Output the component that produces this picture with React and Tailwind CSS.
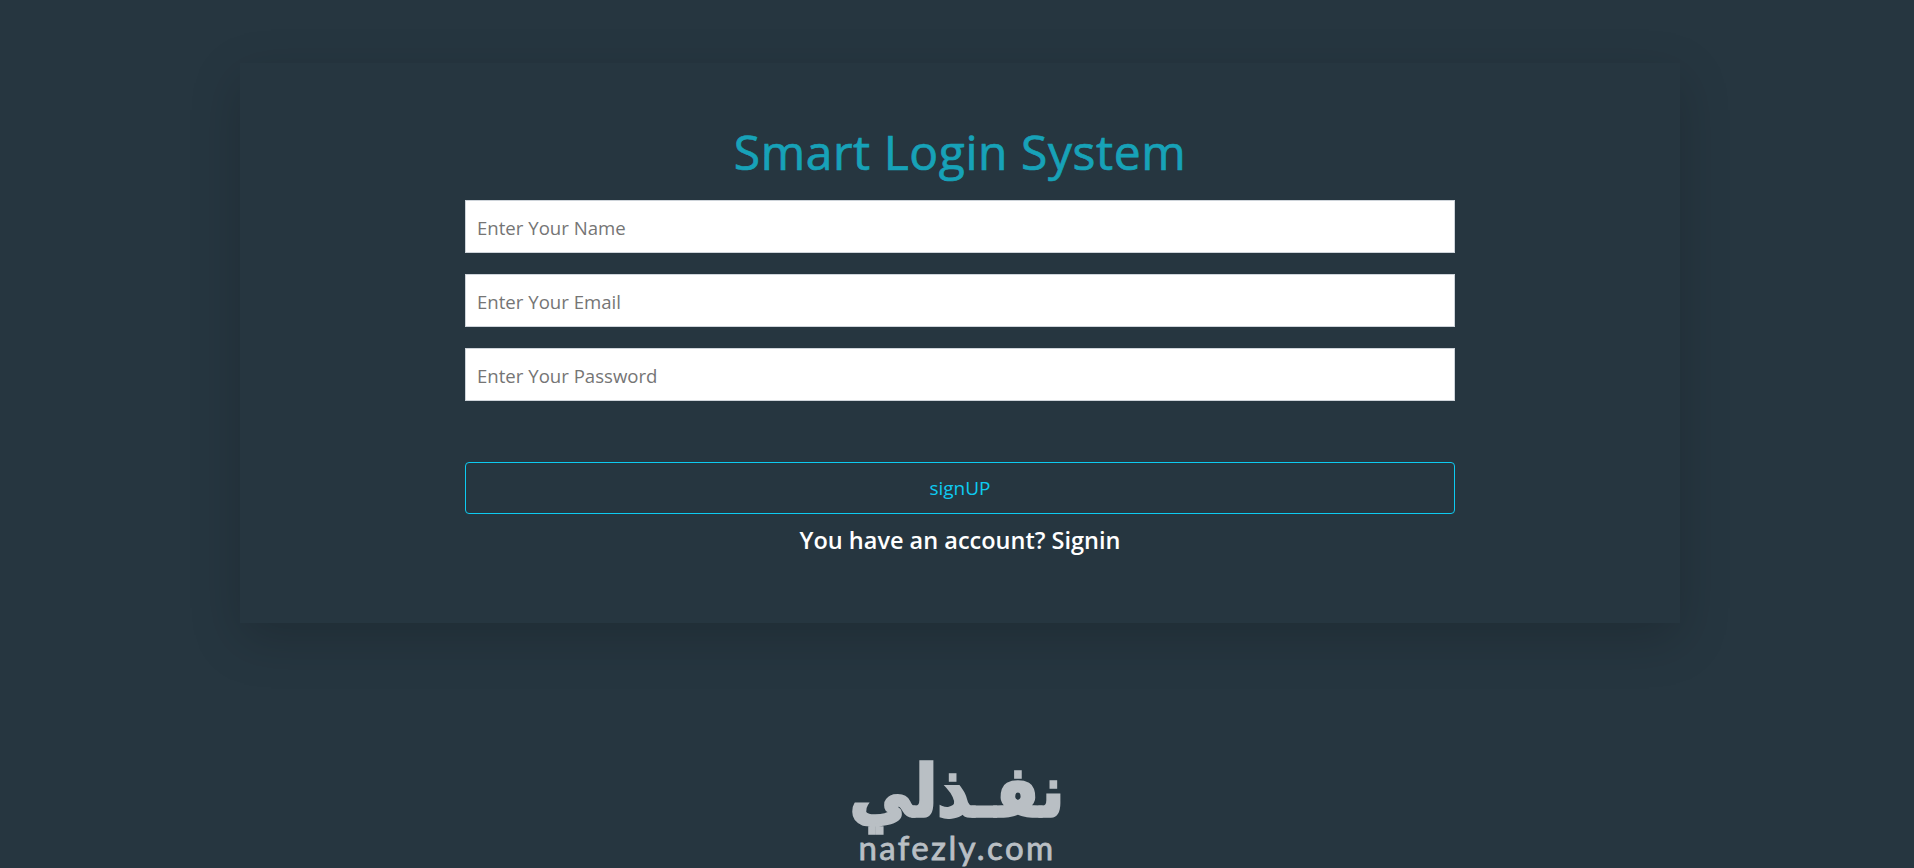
import React from 'react';

const fields = ['Enter Your Name', 'Enter Your Email', 'Enter Your Password'];

const Logo = () => (
  <div className="flex flex-col items-center text-[#b9bfc4] select-none">
    <div
      dir="rtl"
      className="h-[76px] origin-bottom scale-y-[1.12] font-['DejaVu_Sans',sans-serif] font-bold text-[63px] leading-[78px] [-webkit-text-stroke:3px_#b9bfc4]"
    >
      نفـذلي
    </div>
    <div className="h-[30px] font-['Lato',sans-serif] text-[33px] leading-[26px] tracking-[2.4px] [-webkit-text-stroke:0.8px_#b9bfc4]">
      nafezly.com
    </div>
  </div>
);

export default function App() {
  return (
    <div className="h-[868px] overflow-hidden bg-[#263640] flex flex-col font-['Open_Sans',sans-serif]">
      <div className="mt-[63px] ml-[240px] w-[1440px] h-[560px] shrink-0 shadow-[0_16px_48px_rgba(0,0,0,0.175)] flex flex-col items-center pt-[53px]">
        <h1 className="h-[84px] text-[48px] leading-[72px] tracking-[0.55px] font-normal text-[#17a2b8] [-webkit-text-stroke:0.7px_#17a2b8]">Smart Login System</h1>
        <form className="w-[990px] flex flex-col">
          {fields.map((f) => (
            <input
              key={f}
              placeholder={f}
              className="h-[53px] mb-[21px] px-[11px] pt-[1px] bg-white border border-[#ced4da] text-[18.6px] outline-none placeholder:text-[#757575]"
            />
          ))}
          <button
            type="button"
            className="mt-[40px] h-[52px] pt-[1px] rounded-[4px] border border-[#0dcaf0] text-[#0dcaf0] text-[19px]"
          >
            signUP
          </button>
          <p className="mt-[10px] text-center text-white text-[23.5px] leading-[32px] font-semibold">
            You have an account? Signin
          </p>
        </form>
      </div>
      <div className="mt-[135px] flex justify-center">
        <Logo />
      </div>
    </div>
  );
}
